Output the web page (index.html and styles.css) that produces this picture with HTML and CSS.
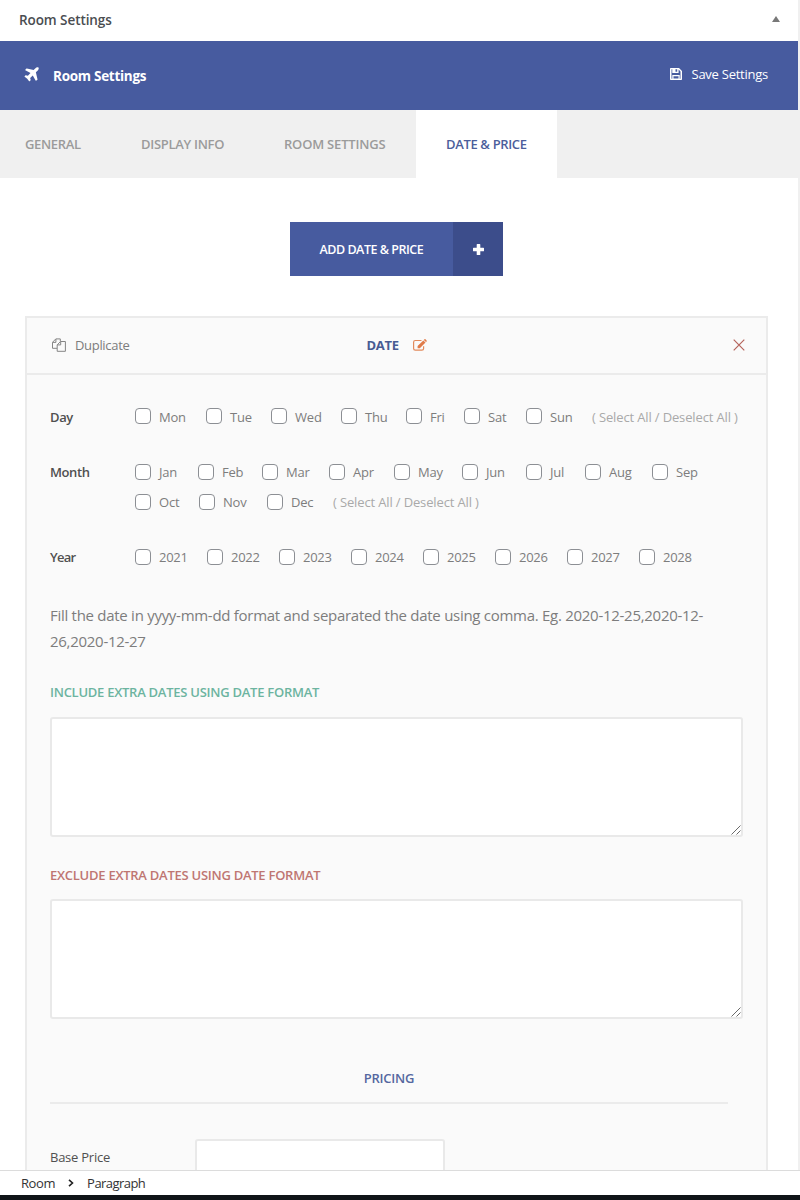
FILE: index.html
```html
<!DOCTYPE html>
<html lang="en">
<head>
<meta charset="utf-8">
<title>Room Settings</title>
<link rel="stylesheet" href="styles.css">
</head>
<body>
<div class="page">
  <main class="panel">
    <div class="metabox"><h2 class="metabox-title">Room Settings</h2><span class="toggle"></span></div>
    <header class="header">
      <div class="header-name">
        <svg class="plane" viewBox="150 120 1460 1480" width="15" height="15"><path d="M1568 160q44 52 12 148t-108 172l-161 161 160 696q5 19-12 33l-128 96q-7 6-19 6-4 0-7-1-15-3-21-16l-279-508-259 259 53 194q5 17-8 31l-96 96q-9 9-23 9h-2q-15-2-24-13l-189-252-252-189q-11-7-13-23-1-13 9-25l96-97q9-9 23-9 6 0 8 1l194 53 259-259-508-279q-14-8-17-24-2-16 9-27l128-128q14-13 30-8l665 159 160-160q76-76 172-108t148 12z"/></svg>
        <span class="header-title">Room Settings</span>
      </div>
      <div class="save">
        <svg viewBox="0 0 12 12" width="12" height="12"><path fill-rule="evenodd" d="M.8 0H9L12 3V11.200Q12 12 11.200 12H.8Q0 12 0 11.200V.8Q0 0 .8 0ZM1.500 1.200V10.800H2.300V6.900H9.700V10.800H10.500V3.600L8.600 1.500V5H2.300V1.200ZM5.500 1.200V3.700H7.200V1.200ZM3.500 8.300V10.500H8.500V8.300Z"/></svg>
        <span class="save-text">Save Settings</span>
      </div>
    </header>
    <nav class="tabs">
      <span class="tab">GENERAL</span>
      <span class="tab">DISPLAY INFO</span>
      <span class="tab">ROOM SETTINGS</span>
      <span class="tab tab-active">DATE &amp; PRICE</span>
    </nav>
    <div class="add">
      <span class="add-text">ADD DATE &amp; PRICE</span>
      <span class="add-icon"><svg viewBox="0 0 11 11" width="11" height="11"><path d="M4.300 0H6.700Q7.300 0 7.300.6V3.700H10.400Q11 3.700 11 4.300V6.700Q11 7.300 10.400 7.300H7.300V10.400Q7.300 11 6.700 11H4.300Q3.700 11 3.700 10.400V7.300H.6Q0 7.300 0 6.700V4.300Q0 3.700.6 3.700H3.700V.6Q3.700 0 4.300 0Z"/></svg></span>
    </div>
    <section class="card">
      <div class="card-head">
        <div class="duplicate">
          <svg viewBox="0 0 14 14" width="14" height="14"><path d="M5 10.300H.5V4.300L3.800.9H8.300V3.500M.6 4.400H3.900V1M5.200 6.800 8.600 3.500H13.400V13.300H5.200ZM5.300 6.900H8.700V3.600"/></svg>
          <span>Duplicate</span>
        </div>
        <div class="date-title"><span>DATE</span>
          <svg viewBox="0 0 14 12" width="14" height="12"><path class="line" d="M8.500 1.500H2.300Q.6 1.500.6 3.200V9.500Q.6 11.200 2.300 11.200H8.900Q10.600 11.200 10.600 9.500V7.300"/><path class="solid" d="M4.600 7.100 10.300 1.400 12.500 3.600 6.800 9.300H4.600ZM10.800.9 11.500.2Q12 -.2 12.500.3L13.600 1.400Q14 1.900 13.600 2.400L13 3.100Z"/></svg>
        </div>
        <svg class="close" viewBox="0 0 12 12" width="12" height="12"><path d="M.7.7 11.300 11.300M11.300.7.7 11.300"/></svg>
      </div>
      <div class="card-body">
        <div class="row row-day">
          <span class="label">Day</span>
          <div class="options days">
            <label class="opt"><i class="box"></i>Mon</label><label class="opt"><i class="box"></i>Tue</label><label class="opt"><i class="box"></i>Wed</label><label class="opt"><i class="box"></i>Thu</label><label class="opt"><i class="box"></i>Fri</label><label class="opt"><i class="box"></i>Sat</label><label class="opt"><i class="box"></i>Sun</label><span class="select">( Select All / Deselect All )</span>
          </div>
        </div>
        <div class="row row-month">
          <span class="label label-month">Month</span>
          <div>
            <div class="options months">
              <label class="opt"><i class="box"></i>Jan</label><label class="opt"><i class="box"></i>Feb</label><label class="opt"><i class="box"></i>Mar</label><label class="opt"><i class="box"></i>Apr</label><label class="opt"><i class="box"></i>May</label><label class="opt"><i class="box"></i>Jun</label><label class="opt"><i class="box"></i>Jul</label><label class="opt"><i class="box"></i>Aug</label><label class="opt"><i class="box"></i>Sep</label>
            </div>
            <div class="options months-last">
              <label class="opt"><i class="box"></i>Oct</label><label class="opt"><i class="box"></i>Nov</label><label class="opt"><i class="box"></i>Dec</label><span class="select">( Select All / Deselect All )</span>
            </div>
          </div>
        </div>
        <div class="row row-year">
          <span class="label label-year">Year</span>
          <div class="options years">
            <label class="opt"><i class="box"></i>2021</label><label class="opt"><i class="box"></i>2022</label><label class="opt"><i class="box"></i>2023</label><label class="opt"><i class="box"></i>2024</label><label class="opt"><i class="box"></i>2025</label><label class="opt"><i class="box"></i>2026</label><label class="opt"><i class="box"></i>2027</label><label class="opt"><i class="box"></i>2028</label>
          </div>
        </div>
        <p class="hint">Fill the date in yyyy-mm-dd format and separated the date using comma. Eg. 2020-12-25,2020-12-<br>26,2020-12-27</p>
        <h3 class="caption include">INCLUDE EXTRA DATES USING DATE FORMAT</h3>
        <div class="area"><svg class="grip" viewBox="0 0 10 10" width="10" height="10"><path d="M.5 9.500 9.500.5M5.500 9.500 9.500 5.500"/></svg></div>
        <h3 class="caption exclude">EXCLUDE EXTRA DATES USING DATE FORMAT</h3>
        <div class="area"><svg class="grip" viewBox="0 0 10 10" width="10" height="10"><path d="M.5 9.500 9.500.5M5.500 9.500 9.500 5.500"/></svg></div>
        <h3 class="pricing">PRICING</h3>
        <div class="price-row"><span class="price-label">Base Price</span><span class="price-input"></span></div>
      </div>
    </section>
  </main>
  <footer class="crumbs"><span class="crumb-room">Room</span><svg viewBox="0 0 6 8" width="6" height="8"><path d="M1 .8 4.500 4 1 7.200"/></svg><span class="crumb-para">Paragraph</span></footer>
  <div class="strip"></div>
</div>
</body>
</html>
```
FILE: styles.css
```css
* { box-sizing: border-box; }
body { margin: 0; font-family: "Open Sans", "Noto Sans", sans-serif; font-size: 13px; color: #7d7d7d; background: #fff; }
svg { display: block; flex: none; }
h2, h3, p { margin: 0; }
.page { height: 1200px; display: flex; flex-direction: column; overflow: hidden; }
.panel { height: 1170px; flex: none; overflow: hidden; border-right: 2px solid #f0f0f0; }
.metabox { height: 41px; display: flex; align-items: center; justify-content: space-between; padding: 0 18px 4px 19px; }
.metabox-title { font-size: 13.500px; font-weight: 600; color: #4a4d51; letter-spacing: -.08px; padding-top: 3px; }
.toggle { border: 4px solid transparent; border-top: 0; border-bottom: 6px solid #787878; }
.header { height: 69px; background: #475b9f; color: #fff; display: flex; align-items: center; justify-content: space-between; padding: 0 30px 0 24px; }
.header-name { display: flex; align-items: center; gap: 14px; }
.plane { fill: #fff; margin-bottom: 2px; }
.header-title { font-size: 13.500px; font-weight: 700; letter-spacing: -.28px; }
.save { display: flex; align-items: center; gap: 10px; padding-bottom: 3px; }
.save svg { fill: #fff; }
.save-text { letter-spacing: -.25px; }
.tabs { height: 68px; background: #f0f0f0; display: flex; align-items: stretch; }
.tab { display: flex; align-items: center; color: #9b9b9b; font-weight: 600; letter-spacing: -.35px; }
.tab:nth-child(1) { width: 111px; padding-left: 25px; }
.tab:nth-child(2) { width: 143px; padding-left: 30px; letter-spacing: -.3px; }
.tab:nth-child(3) { width: 162px; padding-left: 30px; letter-spacing: -.2px; }
.tab.tab-active { width: 141px; padding-left: 30px; background: #fff; color: #4c5e9b; }
.add { margin: 44px 0 0 290px; width: 213px; height: 54px; display: flex; color: #fff; background: #475b9f; }
.add-text { width: 163px; padding-left: 29.500px; display: flex; align-items: center; font-weight: 600; font-size: 12.500px; letter-spacing: -.48px; white-space: nowrap; }
.add-icon { flex: 1; background: #3c4d8b; display: flex; align-items: center; justify-content: center; }
.add-icon svg { fill: #fff; }
.card { margin: 40px 0 0 25px; width: 743px; height: 900px; border: 2px solid #ebebeb; background: #fafafa; }
.card-head { height: 57px; border-bottom: 2px solid #ebebeb; display: grid; grid-template-columns: 314.500px 1fr 12px; align-items: center; padding: 0 21.500px 1px 25px; }
.duplicate { display: flex; align-items: center; gap: 9px; letter-spacing: -.32px; }
.duplicate svg { fill: none; stroke: #858585; }
.date-title { display: flex; align-items: center; gap: 14px; font-weight: 700; color: #475b93; letter-spacing: -.3px; }
.date-title .line { fill: none; stroke: #e28a5c; stroke-width: 1.200; }
.date-title .solid { fill: #e07b49; }
.close { stroke: #b5645c; stroke-width: 1.200; }
.card-body { padding: 27px 23px 0; }
.row { display: grid; grid-template-columns: 85px 1fr; line-height: 30px; }
.row-month { margin-top: 25px; }
.row-year { margin-top: 25px; }
.label { font-weight: 600; color: #505050; letter-spacing: -.4px; }
.label-year { letter-spacing: -.7px; }
.options { display: grid; white-space: nowrap; }
.days { grid-template-columns: 71px 65px 70px 65px 58px 62px 66px 1fr; }
.months { grid-template-columns: 63px 64px 67px 65px 68px 64px 59px 67px 1fr; }
.months-last { grid-template-columns: 64px 68px 66px 1fr; }
.years { grid-template-columns: repeat(8, 72px); }
.opt { display: flex; gap: 8px; align-items: center; letter-spacing: -.2px; }
.years .opt { letter-spacing: -.3px; }
.box { width: 16px; height: 16px; border: 1px solid #8c8f94; border-radius: 4px; background: #fff; }
.days .box { margin-bottom: 2px; }
.select { color: #a9a9a9; letter-spacing: -.14px; }
.hint { font-size: 15px; line-height: 26px; margin-top: 30px; white-space: nowrap; letter-spacing: -.28px; }
.caption { font-size: 13px; font-weight: 600; line-height: 20px; white-space: nowrap; letter-spacing: -.26px; }
.include { color: #6cb4a0; margin-top: 28px; }
.exclude { color: #bf7672; margin-top: 28px; }
.area { height: 120px; width: 693px; margin-top: 15px; border: 2px solid #e9e9e9; border-radius: 3px; background: #fff; display: flex; align-items: flex-end; justify-content: flex-end; }
.exclude + .area { margin-top: 14px; }
.grip { fill: none; stroke: #6a6a6a; }
.pricing { width: 678px; margin-top: 48px; height: 37px; border-bottom: 2px solid #ebebeb; text-align: center; font-size: 13px; line-height: 22px; font-weight: 600; color: #5567a0; letter-spacing: -.25px; }
.price-row { margin-top: 35px; display: flex; }
.price-label { width: 145px; line-height: 36px; color: #505050; letter-spacing: -.25px; }
.price-input { width: 250px; height: 50px; background: #fff; border: 2px solid #e9e9e9; border-radius: 3px; }
.crumbs { height: 25px; flex: none; border-top: 1px solid #dcdcdc; background: #fff; display: flex; align-items: center; padding-left: 21px; color: #333; }
.crumbs svg { fill: none; stroke: #222; stroke-width: 1.600; margin: 0 13px; }
.crumb-room { letter-spacing: -.4px; }
.crumb-para { letter-spacing: -.55px; }
.strip { height: 5px; flex: none; background: #101418; }
```
